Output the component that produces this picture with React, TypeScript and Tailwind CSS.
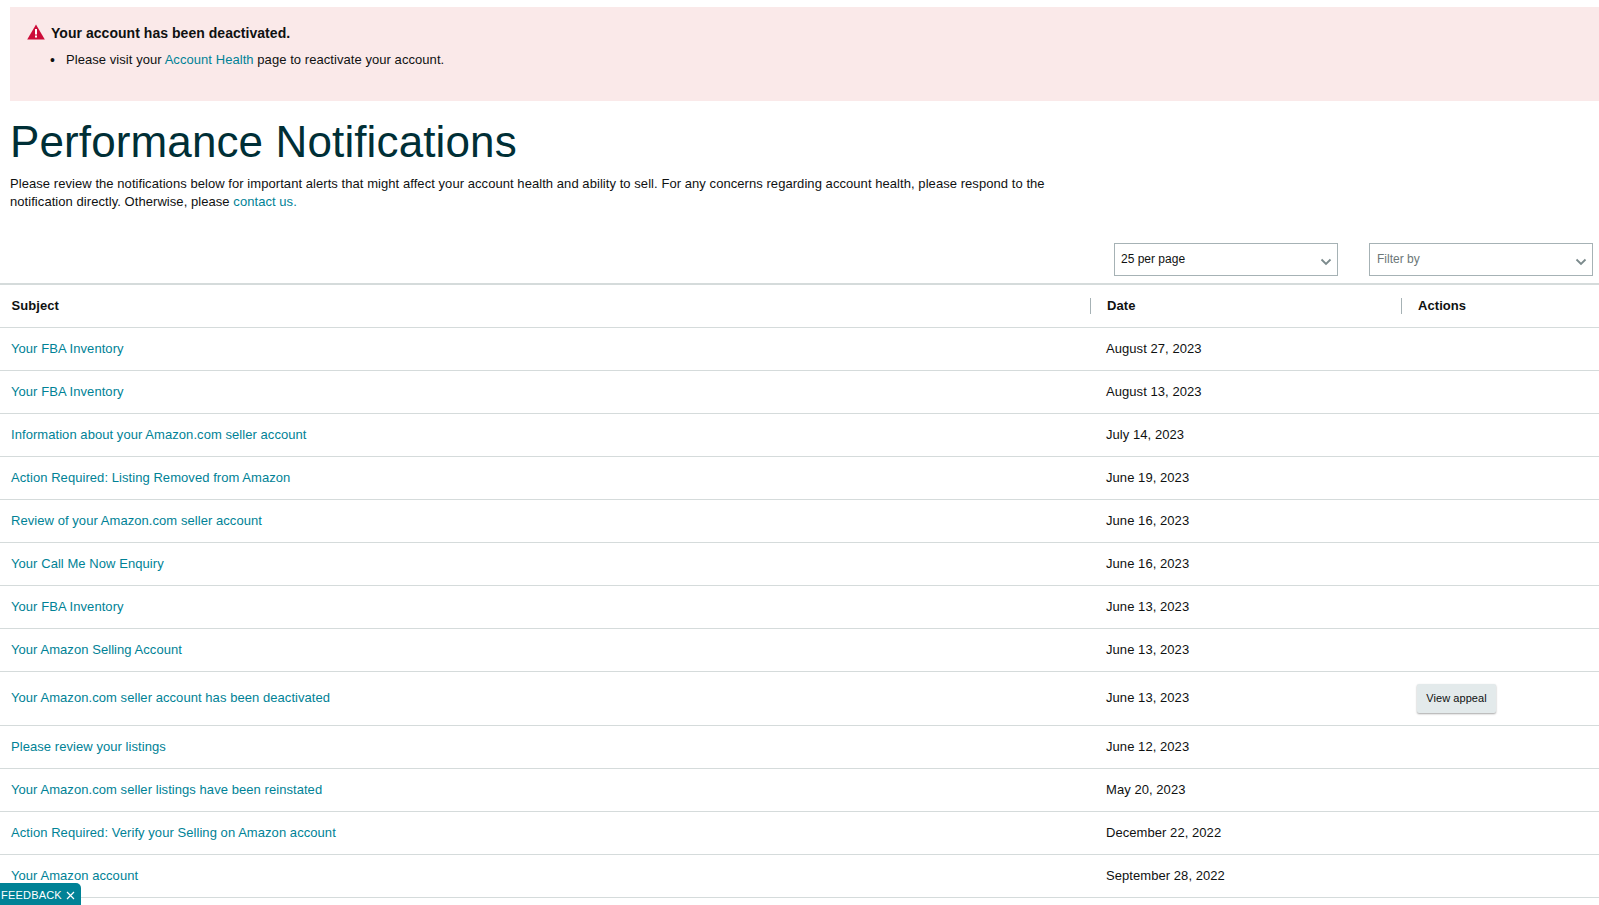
import React from "react";

const rows: [string, string, boolean?][] = [
  ["Your FBA Inventory", "August 27, 2023"],
  ["Your FBA Inventory", "August 13, 2023"],
  ["Information about your Amazon.com seller account", "July 14, 2023"],
  ["Action Required: Listing Removed from Amazon", "June 19, 2023"],
  ["Review of your Amazon.com seller account", "June 16, 2023"],
  ["Your Call Me Now Enquiry", "June 16, 2023"],
  ["Your FBA Inventory", "June 13, 2023"],
  ["Your Amazon Selling Account", "June 13, 2023"],
  ["Your Amazon.com seller account has been deactivated", "June 13, 2023", true],
  ["Please review your listings", "June 12, 2023"],
  ["Your Amazon.com seller listings have been reinstated", "May 20, 2023"],
  ["Action Required: Verify your Selling on Amazon account", "December 22, 2022"],
  ["Your Amazon account", "September 28, 2022"],
];

function Chevron() {
  return (
    <svg width="12" height="8" viewBox="0 0 12 8" className="absolute right-[5px] top-[14px]" fill="none">
      <path d="M1.5 1.5 L6 6 L10.5 1.5" stroke="#7b8a8c" strokeWidth="1.8" />
    </svg>
  );
}

export default function App() {
  return (
    <div className="h-[905px] overflow-hidden bg-white font-['Liberation_Sans',Arial,sans-serif] text-[13px] leading-[18px] tracking-[0.06px] text-[#0f1111] relative">
      <div className="pt-[7px] pl-[10px]">
        <div className="h-[94px] bg-[#fae9e9] pl-[17px] pt-[17px]">
          <div className="flex items-center h-[18px]">
            <svg width="18" height="16" viewBox="0 0 18 16" className="mr-[6px] -mt-[3px]">
              <path d="M9 0.5 L17.8 15.5 L0.2 15.5 Z" fill="#cc0c39" />
              <rect x="8" y="5" width="2" height="5.5" fill="#fff" />
              <rect x="8" y="11.5" width="2" height="2" fill="#fff" />
            </svg>
            <span className="font-bold text-[14px] tracking-[0.04px]">Your account has been deactivated.</span>
          </div>
          <div className="flex mt-[9px] pl-[23px]">
            <span className="w-[16px] text-[14px]">•</span>
            <span>
              Please visit your <a className="text-[#008296]">Account Health</a> page to reactivate your account.
            </span>
          </div>
        </div>
      </div>
      <h1 className="pl-[10px] mt-[16px] text-[44px] leading-[50px] tracking-[0.12px] font-normal text-[#002f36]">Performance Notifications</h1>
      <p className="pl-[10px] mt-[8px] w-[1060px]">
        Please review the notifications below for important alerts that might affect your account health and ability to sell. For any concerns regarding account health, please respond to the notification directly. Otherwise, please <a className="text-[#008296]">contact us.</a>
      </p>
      <div className="flex justify-end mt-[32px] pr-[6px] gap-[31px] text-[12px] tracking-normal">
        <div className="relative w-[224px] h-[33px] border border-[#a6b2b5] pl-[6px] leading-[31px]">25 per page<Chevron /></div>
        <div className="relative w-[224px] h-[33px] border border-[#a6b2b5] pl-[7px] leading-[31px] text-[#6c7778]">Filter by<Chevron /></div>
      </div>
      <div className="mt-[7px] border-t-2 border-[#d5dbdb]">
        <div className="flex h-[43px] items-center font-bold text-[#0f1111] border-b border-[#d5dbdb]">
          <div className="w-[1090px] pl-[11.5px]">Subject</div>
          <div className="w-[311px] pl-[16px] border-l border-[#a6b2b5] h-[16px] leading-[16px]">Date</div>
          <div className="flex-1 pl-[16px] border-l border-[#a6b2b5] h-[16px] leading-[16px]">Actions</div>
        </div>
        {rows.map(([s, d, btn], i) => (
          <div key={i} className={`flex items-center border-b border-[#d5dbdb] ${btn ? "h-[54px] pb-[1px]" : "h-[43px]"}`}>
            <a className="w-[1090px] pl-[11px] text-[#008296]">{s}</a>
            <div className="w-[312px] pl-[16px]">{d}</div>
            {btn && (
              <button className="ml-[15px] h-[29px] w-[79px] rounded-[2px] bg-[#e3eaeb] text-[11px] text-[#0f1111] shadow-[0_1px_2px_rgba(0,0,0,0.35)]">View appeal</button>
            )}
          </div>
        ))}
      </div>
      <div className="absolute left-0 bottom-0 h-[22px] w-[81px] rounded-tr-[5px] bg-[#008296] text-white text-[11px] tracking-[0.2px] leading-[23px] flex items-center pl-[1px] pt-[2px] gap-[4px]">
        <span>FEEDBACK</span>
        <svg width="9" height="9" viewBox="0 0 9 9" fill="none"><path d="M1 1 L8 8 M8 1 L1 8" stroke="#fff" strokeWidth="1.2" /></svg>
      </div>
    </div>
  );
}
